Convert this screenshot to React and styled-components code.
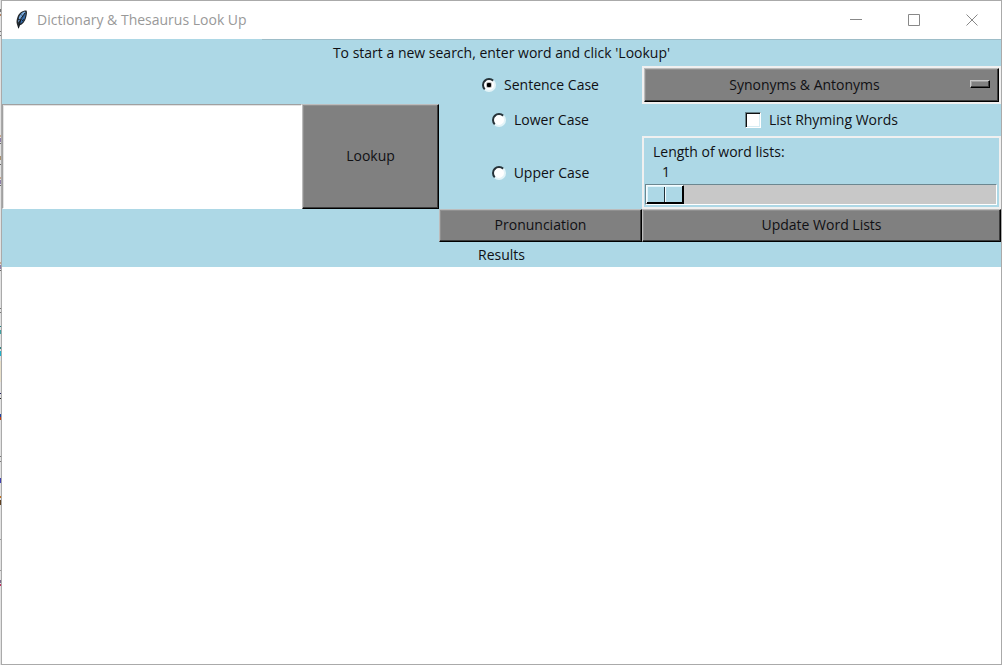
import React, { useState } from "react";
import styled, { createGlobalStyle, css } from "styled-components";

const c = {
  blue: "#add8e6",
  gray: "#808080",
  frame: "#aaaaaa",
  pale: "#f0f0f0",
};

const GlobalStyle = createGlobalStyle`
  *, *::before, *::after { box-sizing: border-box; }
  body {
    margin: 0;
    background: #e2e2e2;
    color: #101014;
    font: 14px/20px "Open Sans", "Noto Sans", sans-serif;
  }
  button, input, select, textarea { font: inherit; color: inherit; margin: 0; border-radius: 0; }
`;

const marks = [
  [9, 12, "#777777"], [14, 16, "#b08060"], [31, 32, "#777777"], [35, 36, "#777777"],
  [135, 137, "#c8a890"], [138, 142, "#8f7fa8"], [143, 144, "#666666"],
  [156, 160, "#a89070"], [164, 165, "#666666"],
  [177, 179, "#c8a890"], [180, 184, "#8f7fa8"], [185, 186, "#666666"],
  [262, 264, "#c8a890"], [265, 269, "#8f7fa8"], [270, 271, "#666666"],
  [308, 309, "#777777"], [312, 313, "#777777"],
  [326, 327, "#208080"], [330, 334, "#40a0a0"], [347, 349, "#308080"], [351, 356, "#20b0c8"],
  [361, 382, "#e8dfc8"], [393, 394, "#202060"], [398, 399, "#222222"],
  [414, 417, "#2040a0"], [417, 420, "#c04010"],
  [456, 457, "#777777"], [461, 462, "#777777"],
  [478, 483, "#4040b0"], [496, 498, "#c07020"], [500, 505, "#604020"],
  [539, 540, "#999999"], [570, 571, "#999999"], [580, 583, "#776688"], [584, 586, "#c03060"],
];

const backdrop = marks
  .map(([a, b, color]) => `transparent ${a}px, ${color} ${a}px ${b}px, transparent ${b}px`)
  .join(", ");

const Desktop = styled.div`
  display: flex;
  min-height: 100vh;
  padding-left: 1px;
  background: linear-gradient(${backdrop}) 0 0 / 1px 100% no-repeat;
`;

const Window = styled.main`
  flex: 1;
  min-width: 0;
  display: flex;
  flex-direction: column;
  border: 1px solid ${c.frame};
  background: #ffffff;
`;

const TitleBar = styled.header`
  display: flex;
  align-items: center;
  height: 38px;
  padding-left: 12px;
  color: #999999;
`;

const Title = styled.h1`
  flex: 1;
  margin: 0 0 0 7px;
  font-size: 14px;
  font-weight: 400;
  line-height: 20px;
`;

const CaptionButton = styled.button`
  display: grid;
  place-items: center;
  width: 58px;
  height: 38px;
  padding: 0;
  border: 0;
  background: none;
  color: #888888;
`;

const Panel = styled.section`
  display: grid;
  grid-template-columns: 300fr 137fr 203fr 359fr;
  grid-template-rows: 27px 38px 32px 73px 33px 25px;
  background: linear-gradient(90deg, transparent 260px, #9dbdc8 260px) 0 0 / 100% 1px no-repeat ${c.blue};
`;

const Caption = styled.label`
  grid-column: 1 / -1;
  display: flex;
  align-items: center;
  justify-content: center;
`;

const raised = css`
  border: 1px solid;
  border-color: #bcbcbc #000000 #000000 #bcbcbc;
  box-shadow: inset -1px -1px 0 #3c3c3c, inset 1px 1px 0 #909090;
  background: ${c.gray};
`;

const WordEntry = styled.input`
  grid-area: 3 / 1 / 5 / 2;
  min-width: 0;
  border: 1px solid;
  border-color: #a0a0a0 #ffffff #ffffff #a0a0a0;
  box-shadow: inset 1px 1px 0 #e3e3e3;
  background: #ffffff;
  padding: 0 4px;
  outline: none;
`;

const PushButton = styled.button`
  ${raised}
  grid-area: ${(p) => p.$area};
  min-width: 0;
  padding: 0 0 2px;
`;

const Choice = styled.label`
  grid-area: ${(p) => p.$area};
  display: flex;
  align-items: center;
  justify-content: center;
  gap: 8px;
`;

const Radio = styled.input`
  appearance: none;
  display: grid;
  place-items: center;
  width: 14px;
  height: 14px;
  border: 2px solid;
  border-color: #263238 #e4f4f8 #e4f4f8 #263238;
  border-radius: 50%;
  background: #ffffff;

  &:checked::after {
    content: "";
    width: 4px;
    height: 4px;
    border-radius: 1px;
    background: #000000;
    box-shadow: 0 0 0 1px #00000040;
  }
`;

const Check = styled.input`
  appearance: none;
  display: grid;
  place-items: center;
  width: 16px;
  height: 16px;
  border: 1px solid;
  border-color: #68828a #ffffff #ffffff #68828a;
  box-shadow: inset 1px 1px 0 #101010, inset -1px -1px 0 #d8edf4;
  background: #ffffff;

  &:checked::after {
    content: "";
    width: 6px;
    height: 6px;
    background: #000000;
  }
`;

const MenuFrame = styled.div`
  grid-area: 2 / 4;
  display: grid;
  border: 2px solid ${c.pale};
  background: ${c.pale};
`;

const Menu = styled.select`
  ${raised}
  grid-area: 1 / 1;
  appearance: none;
  min-width: 0;
  padding: 0 34px 0 0;
  text-align: center;
  text-align-last: center;
`;

const MenuMark = styled.span`
  grid-area: 1 / 1;
  place-self: center end;
  width: 20px;
  height: 8px;
  margin: 0 9px 2px 0;
  border: 1px solid;
  border-color: #c8c8c8 #000000 #000000 #c8c8c8;
  box-shadow: inset -1px -1px 0 #404040, inset 1px 1px 0 #a0a0a0;
  background: ${c.gray};
  pointer-events: none;
`;

const ScaleFrame = styled.div`
  grid-area: 4 / 4;
  display: flex;
  flex-direction: column;
  border: 2px solid ${c.pale};
  padding: 4px 2px 2px 1px;
`;

const ScaleLabel = styled.label`
  padding-left: 8px;
`;

const ScaleValue = styled.output`
  width: 42px;
  margin-bottom: 2px;
  text-align: center;
`;

const Scale = styled.input`
  appearance: none;
  width: 100%;
  height: 21px;
  border: 1px solid;
  border-color: #6c8790 #ffffff #ffffff #6c8790;
  background: #c8c8c8;

  &::-webkit-slider-thumb {
    appearance: none;
    width: 38px;
    height: 19px;
    border: 1px solid;
    border-color: #f4fcff #000000 #000000 #f4fcff;
    box-shadow: inset -1px -1px 0 #000000, inset 1px 1px 0 #e0f4fa;
    background: linear-gradient(90deg, transparent 17px, #203038 17px 18px, #f4fcff 18px 19px, transparent 19px), ${c.blue};
  }
`;

const Results = styled.textarea`
  flex: 1;
  width: 100%;
  padding: 4px;
  border: 0;
  outline: none;
  resize: none;
  background: #ffffff;
`;

const Feather = () => (
  <svg width="16" height="20" viewBox="0 0 16 20" aria-hidden="true">
    <path d="M12.500.5C8 .5 5 3 3.500 7c-1 3-1.300 5-.5 7.500L4.500 19l1-3.500c3-1 5.500-4 6.500-7.500.8-3 1.500-6 .5-7.500Z" fill="#23282d" />
    <path d="M11 1.500C8 2 5.500 5 4.800 8L4 12.500 8 8l3.500-5Z" fill="#78a9dd" />
    <path d="M12 3 9 7l-4 7c2.700-.5 5-3 5.800-6Z" fill="#356dad" />
    <path d="M11 3 7 8.500 4.500 18M4 9l2 1M7 4.500l1 1M8 11l2-1.500" fill="none" stroke="#111820" />
  </svg>
);

const captions = [
  ["Minimize", "M0 5.500h12"],
  ["Maximize", "M.5.5h11v11H.5Z"],
  ["Close", "m.5.5 11 11m0-11-11 11"],
];

const cases = [
  ["Sentence Case", "2 / 3"],
  ["Lower Case", "3 / 3"],
  ["Upper Case", "4 / 3"],
];

export default function App() {
  const [length, setLength] = useState(1);
  return (
    <Desktop>
      <GlobalStyle />
      <Window>
        <TitleBar>
          <Feather />
          <Title>Dictionary &amp; Thesaurus Look Up</Title>
          {captions.map(([name, d]) => (
            <CaptionButton key={name} type="button" aria-label={name}>
              <svg width="12" height="12" viewBox="0 0 12 12" fill="none" stroke="currentColor" aria-hidden="true">
                <path d={d} />
              </svg>
            </CaptionButton>
          ))}
        </TitleBar>
        <Panel>
          <Caption htmlFor="word">To start a new search, enter word and click 'Lookup'</Caption>
          <WordEntry id="word" type="text" />
          <PushButton type="button" $area="3 / 2 / 5 / 3">Lookup</PushButton>
          {cases.map(([name, area], i) => (
            <Choice key={name} $area={area}>
              <Radio type="radio" name="case" defaultChecked={i === 0} />
              {name}
            </Choice>
          ))}
          <MenuFrame>
            <Menu aria-label="Word list type" defaultValue="Synonyms &amp; Antonyms">
              <option>Synonyms &amp; Antonyms</option>
            </Menu>
            <MenuMark />
          </MenuFrame>
          <Choice $area="3 / 4">
            <Check type="checkbox" />
            List Rhyming Words
          </Choice>
          <ScaleFrame>
            <ScaleLabel htmlFor="length">Length of word lists:</ScaleLabel>
            <ScaleValue htmlFor="length">{length}</ScaleValue>
            <Scale
              id="length"
              type="range"
              min="1"
              max="20"
              value={length}
              onChange={(e) => setLength(e.target.value)}
            />
          </ScaleFrame>
          <PushButton type="button" $area="5 / 3">Pronunciation</PushButton>
          <PushButton type="button" $area="5 / 4">Update Word Lists</PushButton>
          <Caption htmlFor="results">Results</Caption>
        </Panel>
        <Results id="results" />
      </Window>
    </Desktop>
  );
}
